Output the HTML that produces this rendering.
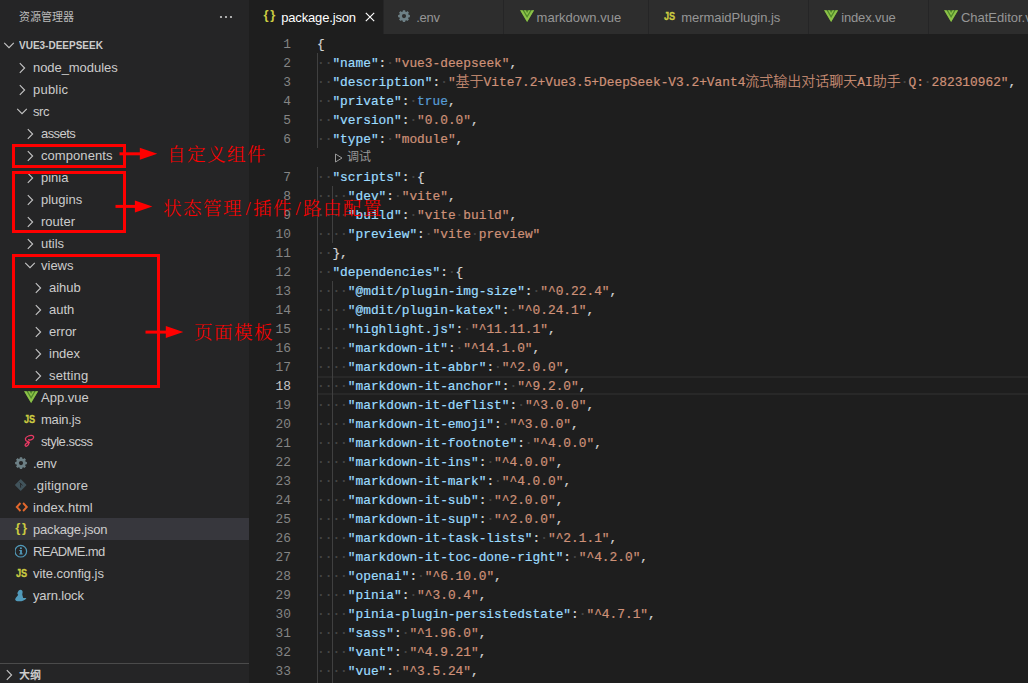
<!DOCTYPE html><html lang="zh-CN"><head><meta charset="utf-8"><title>vue3-deepseek</title><style>
*{box-sizing:border-box;margin:0;padding:0}
html,body{width:1028px;height:683px;overflow:hidden;background:#1e1e1e}
body{position:relative;font-family:"Liberation Sans","Noto Sans CJK SC",sans-serif;font-size:13px;color:#ccc}
#side{position:absolute;left:0;top:0;width:249px;height:683px;background:#252526}
#ed{position:absolute;left:249px;top:0;width:779px;height:683px;background:#1e1e1e;overflow:hidden}
#tabs{position:absolute;left:0;top:0;width:779px;height:34px;background:#252526}
.tab{position:absolute;top:0;height:34px;background:#2d2d2d;border-right:1px solid #252526;color:#969696;line-height:34px;white-space:nowrap;overflow:hidden}
.tab.act{background:#1e1e1e;color:#fff}
.tab .lb{position:absolute;top:0.5px}
.tab svg,.tab .ic{position:absolute}
.ttl{position:absolute;left:19px;top:0;height:34px;line-height:34px;font-size:11px;color:#bbb}
.row{position:absolute;left:0;width:249px;height:22px;line-height:22px;white-space:nowrap}
.row.sel{background:#37373d}
.row .lb{position:absolute;top:1px}
.row svg,.row .ic{position:absolute}
.js{-webkit-text-stroke:0.3px #cbcb41;font-weight:bold;font-size:11.8px;color:#cbcb41;line-height:22px;height:22px;transform:scaleX(0.78);transform-origin:0 0;margin-left:0.5px;margin-top:0px}
.jsn{font-weight:bold;font-size:13px;color:#cbcb41;line-height:22px;height:22px;letter-spacing:1.7px;margin-top:-1px;margin-left:0.3px}
.ln{position:absolute;left:0;width:42px;text-align:right;font-family:"Liberation Mono",monospace;font-size:12.83px;color:#858585;height:19px;line-height:21px}
.ln.cur{color:#c6c6c6}
.cl{position:absolute;left:68px;height:19px;line-height:21px;font-family:"Liberation Mono","Noto Sans CJK SC",monospace;font-size:12.83px;color:#d4d4d4;white-space:pre;-webkit-text-stroke:0.2px}
.cl .k{color:#9cdcfe}.cl .s{color:#ce9178}.cl .b{color:#569cd6}.cl .w{color:#484848}
.cl .cj{font-size:14px;font-weight:300;display:inline-block;width:14px;text-align:center;line-height:21px;vertical-align:top}
.guide{position:absolute;width:1px;background:#404040}
.ann{position:absolute;border:3px solid #ff0000}
.atx{position:absolute;color:#ff0000;font-family:"Liberation Serif","Noto Serif CJK SC",serif;font-size:18.6px;font-weight:300;letter-spacing:1.4px;white-space:nowrap;line-height:24px}
.atx i{display:inline-block;width:10px;text-align:center;font-style:normal;letter-spacing:0}
</style></head><body>
<div id="side">
<div class="ttl">资源管理器</div>
<svg style="position:absolute;left:218px;top:9px" width="16" height="16" viewBox="0 0 16 16"><circle cx="3" cy="8" r="1.1" fill="#ccc"/><circle cx="8" cy="8" r="1.1" fill="#ccc"/><circle cx="13" cy="8" r="1.1" fill="#ccc"/></svg>
<div class="row" style="top:34px">
<svg style="left:0.5px;top:3.3px" width="16" height="16" viewBox="0 0 16 16"><path d="M3.2 5.8 L8 10.6 L12.8 5.8" fill="none" stroke="#c5c5c5" stroke-width="1.1"/></svg>
<span class="lb" style="left:19px;top:0;font-size:11.6px;font-weight:bold;transform:scaleX(0.862);transform-origin:0 0">VUE3-DEEPSEEK</span>
</div>
<div class="row" style="top:56px">
<svg style="left:14px;top:3.7px" width="16" height="16" viewBox="0 0 16 16"><path d="M5.8 3.2 L10.6 8 L5.8 12.8" fill="none" stroke="#c5c5c5" stroke-width="1.1"/></svg>
<span class="lb" style="left:33px;letter-spacing:-0.06px">node_modules</span>
</div>
<div class="row" style="top:78px">
<svg style="left:14px;top:3.7px" width="16" height="16" viewBox="0 0 16 16"><path d="M5.8 3.2 L10.6 8 L5.8 12.8" fill="none" stroke="#c5c5c5" stroke-width="1.1"/></svg>
<span class="lb" style="left:33px;letter-spacing:0.21px">public</span>
</div>
<div class="row" style="top:100px">
<svg style="left:13.5px;top:3.3px" width="16" height="16" viewBox="0 0 16 16"><path d="M3.2 5.8 L8 10.6 L12.8 5.8" fill="none" stroke="#c5c5c5" stroke-width="1.1"/></svg>
<span class="lb" style="left:33px;letter-spacing:-0.42px">src</span>
</div>
<div class="row" style="top:122px">
<svg style="left:22px;top:3.7px" width="16" height="16" viewBox="0 0 16 16"><path d="M5.8 3.2 L10.6 8 L5.8 12.8" fill="none" stroke="#c5c5c5" stroke-width="1.1"/></svg>
<span class="lb" style="left:41px;letter-spacing:-0.58px">assets</span>
</div>
<div class="row" style="top:144px">
<svg style="left:22px;top:3.7px" width="16" height="16" viewBox="0 0 16 16"><path d="M5.8 3.2 L10.6 8 L5.8 12.8" fill="none" stroke="#c5c5c5" stroke-width="1.1"/></svg>
<span class="lb" style="left:41px;letter-spacing:0.07px">components</span>
</div>
<div class="row" style="top:166px">
<svg style="left:22px;top:3.7px" width="16" height="16" viewBox="0 0 16 16"><path d="M5.8 3.2 L10.6 8 L5.8 12.8" fill="none" stroke="#c5c5c5" stroke-width="1.1"/></svg>
<span class="lb" style="left:41px">pinia</span>
</div>
<div class="row" style="top:188px">
<svg style="left:22px;top:3.7px" width="16" height="16" viewBox="0 0 16 16"><path d="M5.8 3.2 L10.6 8 L5.8 12.8" fill="none" stroke="#c5c5c5" stroke-width="1.1"/></svg>
<span class="lb" style="left:41px">plugins</span>
</div>
<div class="row" style="top:210px">
<svg style="left:22px;top:3.7px" width="16" height="16" viewBox="0 0 16 16"><path d="M5.8 3.2 L10.6 8 L5.8 12.8" fill="none" stroke="#c5c5c5" stroke-width="1.1"/></svg>
<span class="lb" style="left:41px">router</span>
</div>
<div class="row" style="top:232px">
<svg style="left:22px;top:3.7px" width="16" height="16" viewBox="0 0 16 16"><path d="M5.8 3.2 L10.6 8 L5.8 12.8" fill="none" stroke="#c5c5c5" stroke-width="1.1"/></svg>
<span class="lb" style="left:41px">utils</span>
</div>
<div class="row" style="top:254px">
<svg style="left:21.5px;top:3.3px" width="16" height="16" viewBox="0 0 16 16"><path d="M3.2 5.8 L8 10.6 L12.8 5.8" fill="none" stroke="#c5c5c5" stroke-width="1.1"/></svg>
<span class="lb" style="left:41px">views</span>
</div>
<div class="row" style="top:276px">
<svg style="left:30px;top:3.7px" width="16" height="16" viewBox="0 0 16 16"><path d="M5.8 3.2 L10.6 8 L5.8 12.8" fill="none" stroke="#c5c5c5" stroke-width="1.1"/></svg>
<span class="lb" style="left:49px">aihub</span>
</div>
<div class="row" style="top:298px">
<svg style="left:30px;top:3.7px" width="16" height="16" viewBox="0 0 16 16"><path d="M5.8 3.2 L10.6 8 L5.8 12.8" fill="none" stroke="#c5c5c5" stroke-width="1.1"/></svg>
<span class="lb" style="left:49px">auth</span>
</div>
<div class="row" style="top:320px">
<svg style="left:30px;top:3.7px" width="16" height="16" viewBox="0 0 16 16"><path d="M5.8 3.2 L10.6 8 L5.8 12.8" fill="none" stroke="#c5c5c5" stroke-width="1.1"/></svg>
<span class="lb" style="left:49px">error</span>
</div>
<div class="row" style="top:342px">
<svg style="left:30px;top:3.7px" width="16" height="16" viewBox="0 0 16 16"><path d="M5.8 3.2 L10.6 8 L5.8 12.8" fill="none" stroke="#c5c5c5" stroke-width="1.1"/></svg>
<span class="lb" style="left:49px">index</span>
</div>
<div class="row" style="top:364px">
<svg style="left:30px;top:3.7px" width="16" height="16" viewBox="0 0 16 16"><path d="M5.8 3.2 L10.6 8 L5.8 12.8" fill="none" stroke="#c5c5c5" stroke-width="1.1"/></svg>
<span class="lb" style="left:49px;letter-spacing:0.14px">setting</span>
</div>
<div class="row" style="top:386px">
<svg style="left:23px;top:0px" width="18" height="22" viewBox="0 0 18 22"><path d="M1.1 5.3 H15.1 L8.1 16.9 Z" fill="#4f8a2a"/><path d="M1.1 5.3 H3.5 L8.1 13 L12.7 5.3 H15.1 L8.1 16.9 Z" fill="#8dc149"/><path d="M5 5.3 H6.6 L8.1 7.9 L9.6 5.3 H11.2 L8.1 10.4 Z" fill="#8dc149"/></svg>
<span class="lb" style="left:41px">App.vue</span>
</div>
<div class="row" style="top:408px">
<span class="ic js" style="left:23px;top:0px">JS</span>
<span class="lb" style="left:41px;letter-spacing:-0.21px">main.js</span>
</div>
<div class="row" style="top:430px">
<svg style="left:23px;top:0px" width="18" height="22" viewBox="0 0 18 22"><path d="M4.6 11.6 C1.4 10.2 1.6 7.4 5.4 6 C8.6 4.8 11.2 5.6 10.6 7.6 C10 9.6 7 10.6 5.6 9.6 M4.8 11.4 C6.6 11.8 6.2 14.4 4.2 15.8 C2.8 16.8 1.6 15.8 2.4 14.4 C3 13.4 4.6 12.6 6.4 12.4" fill="none" stroke="#ea3a64" stroke-width="1.3" stroke-linecap="round"/></svg>
<span class="lb" style="left:41px;letter-spacing:-0.47px">style.scss</span>
</div>
<div class="row" style="top:452px">
<svg style="left:15px;top:0px" width="18" height="22" viewBox="0 0 18 22"><path d="M4.77 6.46 L4.83 5.22 L7.17 5.22 L7.23 6.46 L8.41 6.95 L9.33 6.11 L10.99 7.77 L10.15 8.69 L10.64 9.87 L11.88 9.93 L11.88 12.27 L10.64 12.33 L10.15 13.51 L10.99 14.43 L9.33 16.09 L8.41 15.25 L7.23 15.74 L7.17 16.98 L4.83 16.98 L4.77 15.74 L3.59 15.25 L2.67 16.09 L1.01 14.43 L1.85 13.51 L1.36 12.33 L0.12 12.27 L0.12 9.93 L1.36 9.87 L1.85 8.69 L1.01 7.77 L2.67 6.11 L3.59 6.95 Z" fill="#6d8086"/><circle cx="6" cy="11.1" r="2.1" fill="#252526"/></svg>
<span class="lb" style="left:33px;letter-spacing:-0.31px">.env</span>
</div>
<div class="row" style="top:474px">
<svg style="left:15px;top:0px" width="18" height="22" viewBox="0 0 18 22"><rect x="1.5" y="6.8" width="8.4" height="8.4" rx="0.7" transform="rotate(45 5.7 11)" fill="#41535b"/><path d="M4.6 8.6 L7.6 11.4 M5.6 9.4 V13.6" stroke="#252526" stroke-width="0.9" fill="none"/></svg>
<span class="lb" style="left:33px;letter-spacing:0.17px">.gitignore</span>
</div>
<div class="row" style="top:496px">
<svg style="left:15px;top:0px" width="18" height="22" viewBox="0 0 18 22"><path d="M5.5 7 L1.8 11 L5.5 15 M8.1 7 L11.8 11 L8.1 15" fill="none" stroke="#e4682d" stroke-width="1.9"/></svg>
<span class="lb" style="left:33px;letter-spacing:0.05px">index.html</span>
</div>
<div class="row sel" style="top:518px">
<span class="ic jsn" style="left:15px;top:0px">{}</span>
<span class="lb" style="left:33px;letter-spacing:-0.19px">package.json</span>
</div>
<div class="row" style="top:540px">
<svg style="left:15px;top:0px" width="18" height="22" viewBox="0 0 18 22"><circle cx="5.8" cy="11.2" r="5.8" fill="none" stroke="#519aba" stroke-width="1.2"/><rect x="5.1" y="10" width="1.8" height="4.2" fill="#519aba"/><circle cx="5.9" cy="8.3" r="1.05" fill="#519aba"/><rect x="4.2" y="13.5" width="3.6" height="0.9" fill="#519aba"/><rect x="4.2" y="10" width="1.8" height="0.9" fill="#519aba"/></svg>
<span class="lb" style="left:33px;letter-spacing:-0.64px">README.md</span>
</div>
<div class="row" style="top:562px">
<span class="ic js" style="left:15px;top:0px">JS</span>
<span class="lb" style="left:33px;letter-spacing:-0.05px">vite.config.js</span>
</div>
<div class="row" style="top:584px">
<svg style="left:15px;top:0px" width="18" height="22" viewBox="0 0 18 22"><path d="M5.5 5.8 C6.8 5.8 7.8 7 7.6 8.2 C7.5 9.4 7.2 10 7.3 10.8 C7.6 12 8 13 8.2 14 C9.4 14.2 10.4 13.8 11.4 14.3 C10.6 15.6 8.6 17 6.4 17.2 C4.4 17.4 2.4 17.4 1.4 16.9 C0.4 16.4 0 15.6 0.25 14.9 C0.8 13.4 2.6 12.4 3.2 10.8 C2.4 10.2 2.2 9.2 2.6 8.5 C3.2 7 4.2 5.9 5.5 5.8 Z" fill="#519aba"/></svg>
<span class="lb" style="left:33px;letter-spacing:-0.14px">yarn.lock</span>
</div>
<div style="position:absolute;left:0;top:663px;width:249px;height:1px;background:#4b4b4b"></div>
<div class="row" style="top:664px"><svg style="left:1px;top:2.7px" width="16" height="16" viewBox="0 0 16 16"><path d="M5.8 3.2 L10.6 8 L5.8 12.8" fill="none" stroke="#c5c5c5" stroke-width="1.1"/></svg><span class="lb" style="left:19px;top:0;font-size:11px;font-weight:bold">大纲</span></div>
</div>
<div id="ed">
<div id="tabs">
<div class="tab act" style="left:0px;width:135px">
<span class="ic jsn" style="left:14.2px;top:4.6px">{}</span>
<span class="lb" style="left:32.2px;letter-spacing:-0.16px">package.json</span>
<svg style="left:112.5px;top:9.3px" width="16" height="16" viewBox="0 0 16 16"><path d="M3.8 3.8 L12.2 12.2 M12.2 3.8 L3.8 12.2" stroke="#fff" stroke-width="1.15" fill="none"/></svg>
</div>
<div class="tab" style="left:135px;width:120px">
<svg style="left:14.2px;top:4.6px" width="18" height="22" viewBox="0 0 18 22"><path d="M4.77 6.46 L4.83 5.22 L7.17 5.22 L7.23 6.46 L8.41 6.95 L9.33 6.11 L10.99 7.77 L10.15 8.69 L10.64 9.87 L11.88 9.93 L11.88 12.27 L10.64 12.33 L10.15 13.51 L10.99 14.43 L9.33 16.09 L8.41 15.25 L7.23 15.74 L7.17 16.98 L4.83 16.98 L4.77 15.74 L3.59 15.25 L2.67 16.09 L1.01 14.43 L1.85 13.51 L1.36 12.33 L0.12 12.27 L0.12 9.93 L1.36 9.87 L1.85 8.69 L1.01 7.77 L2.67 6.11 L3.59 6.95 Z" fill="#6d8086"/><circle cx="6" cy="11.1" r="2.1" fill="#2d2d2d"/></svg>
<span class="lb" style="left:32.2px;letter-spacing:-0.25px">.env</span>
</div>
<div class="tab" style="left:255px;width:145px">
<svg style="left:14.6px;top:4.6px" width="18" height="22" viewBox="0 0 18 22"><path d="M1.1 5.3 H15.1 L8.1 16.9 Z" fill="#4f8a2a"/><path d="M1.1 5.3 H3.5 L8.1 13 L12.7 5.3 H15.1 L8.1 16.9 Z" fill="#8dc149"/><path d="M5 5.3 H6.6 L8.1 7.9 L9.6 5.3 H11.2 L8.1 10.4 Z" fill="#8dc149"/></svg>
<span class="lb" style="left:32.6px">markdown.vue</span>
</div>
<div class="tab" style="left:400px;width:160px">
<span class="ic js" style="left:14.3px;top:4.6px">JS</span>
<span class="lb" style="left:32.3px;letter-spacing:-0.05px">mermaidPlugin.js</span>
</div>
<div class="tab" style="left:560px;width:120px">
<svg style="left:14.2px;top:4.6px" width="18" height="22" viewBox="0 0 18 22"><path d="M1.1 5.3 H15.1 L8.1 16.9 Z" fill="#4f8a2a"/><path d="M1.1 5.3 H3.5 L8.1 13 L12.7 5.3 H15.1 L8.1 16.9 Z" fill="#8dc149"/><path d="M5 5.3 H6.6 L8.1 7.9 L9.6 5.3 H11.2 L8.1 10.4 Z" fill="#8dc149"/></svg>
<span class="lb" style="left:32.2px;letter-spacing:-0.14px">index.vue</span>
</div>
<div class="tab" style="left:680px;width:140px">
<svg style="left:13.9px;top:4.6px" width="18" height="22" viewBox="0 0 18 22"><path d="M1.1 5.3 H15.1 L8.1 16.9 Z" fill="#4f8a2a"/><path d="M1.1 5.3 H3.5 L8.1 13 L12.7 5.3 H15.1 L8.1 16.9 Z" fill="#8dc149"/><path d="M5 5.3 H6.6 L8.1 7.9 L9.6 5.3 H11.2 L8.1 10.4 Z" fill="#8dc149"/></svg>
<span class="lb" style="left:31.9px">ChatEditor.vue</span>
</div>
</div>
<div class="ln" style="top:34px">1</div>
<div class="cl" style="top:34px">{</div>
<div class="ln" style="top:53px">2</div>
<div class="cl" style="top:53px"><span class="w">··</span><span class="k">&quot;name&quot;</span>:<span class="w">·</span><span class="s">&quot;vue3-deepseek&quot;</span>,</div>
<div class="ln" style="top:72px">3</div>
<div class="cl" style="top:72px"><span class="w">··</span><span class="k">&quot;description&quot;</span>:<span class="w">·</span><span class="s">&quot;<span class="cj">基</span><span class="cj">于</span>Vite7.2+Vue3.5+DeepSeek-V3.2+Vant4<span class="cj">流</span><span class="cj">式</span><span class="cj">输</span><span class="cj">出</span><span class="cj">对</span><span class="cj">话</span><span class="cj">聊</span><span class="cj">天</span>AI<span class="cj">助</span><span class="cj">手</span></span><span class="w">·</span><span class="s">Q:</span><span class="w">·</span><span class="s">282310962&quot;</span>,</div>
<div class="ln" style="top:91px">4</div>
<div class="cl" style="top:91px"><span class="w">··</span><span class="k">&quot;private&quot;</span>:<span class="w">·</span><span class="b">true</span>,</div>
<div class="ln" style="top:110px">5</div>
<div class="cl" style="top:110px"><span class="w">··</span><span class="k">&quot;version&quot;</span>:<span class="w">·</span><span class="s">&quot;0.0.0&quot;</span>,</div>
<div class="ln" style="top:129px">6</div>
<div class="cl" style="top:129px"><span class="w">··</span><span class="k">&quot;type&quot;</span>:<span class="w">·</span><span class="s">&quot;module&quot;</span>,</div>
<div style="position:absolute;left:84px;top:148px;height:18px;line-height:18px;font-size:12px;color:#999;white-space:nowrap"><svg style="position:absolute;left:1px;top:4.5px" width="10" height="10" viewBox="0 0 10 10"><path d="M1.5 1 L8 5 L1.5 9 Z" fill="none" stroke="#999" stroke-width="1"/></svg><span style="position:absolute;left:14px;top:0">调试</span></div>
<div class="ln" style="top:167px">7</div>
<div class="cl" style="top:167px"><span class="w">··</span><span class="k">&quot;scripts&quot;</span>:<span class="w">·</span>{</div>
<div class="ln" style="top:186px">8</div>
<div class="cl" style="top:186px"><span class="w">····</span><span class="k">&quot;dev&quot;</span>:<span class="w">·</span><span class="s">&quot;vite&quot;</span>,</div>
<div class="ln" style="top:205px">9</div>
<div class="cl" style="top:205px"><span class="w">····</span><span class="k">&quot;build&quot;</span>:<span class="w">·</span><span class="s">&quot;vite</span><span class="w">·</span><span class="s">build&quot;</span>,</div>
<div class="ln" style="top:224px">10</div>
<div class="cl" style="top:224px"><span class="w">····</span><span class="k">&quot;preview&quot;</span>:<span class="w">·</span><span class="s">&quot;vite</span><span class="w">·</span><span class="s">preview&quot;</span></div>
<div class="ln" style="top:243px">11</div>
<div class="cl" style="top:243px"><span class="w">··</span>},</div>
<div class="ln" style="top:262px">12</div>
<div class="cl" style="top:262px"><span class="w">··</span><span class="k">&quot;dependencies&quot;</span>:<span class="w">·</span>{</div>
<div class="ln" style="top:281px">13</div>
<div class="cl" style="top:281px"><span class="w">····</span><span class="k">&quot;@mdit/plugin-img-size&quot;</span>:<span class="w">·</span><span class="s">&quot;^0.22.4&quot;</span>,</div>
<div class="ln" style="top:300px">14</div>
<div class="cl" style="top:300px"><span class="w">····</span><span class="k">&quot;@mdit/plugin-katex&quot;</span>:<span class="w">·</span><span class="s">&quot;^0.24.1&quot;</span>,</div>
<div class="ln" style="top:319px">15</div>
<div class="cl" style="top:319px"><span class="w">····</span><span class="k">&quot;highlight.js&quot;</span>:<span class="w">·</span><span class="s">&quot;^11.11.1&quot;</span>,</div>
<div class="ln" style="top:338px">16</div>
<div class="cl" style="top:338px"><span class="w">····</span><span class="k">&quot;markdown-it&quot;</span>:<span class="w">·</span><span class="s">&quot;^14.1.0&quot;</span>,</div>
<div class="ln" style="top:357px">17</div>
<div class="cl" style="top:357px"><span class="w">····</span><span class="k">&quot;markdown-it-abbr&quot;</span>:<span class="w">·</span><span class="s">&quot;^2.0.0&quot;</span>,</div>
<div style="position:absolute;left:68px;top:376px;width:711px;height:19px;border-top:2px solid #282828;border-bottom:2px solid #282828"></div>
<div class="ln cur" style="top:376px">18</div>
<div class="cl" style="top:376px"><span class="w">····</span><span class="k">&quot;markdown-it-anchor&quot;</span>:<span class="w">·</span><span class="s">&quot;^9.2.0&quot;</span>,</div>
<div class="ln" style="top:395px">19</div>
<div class="cl" style="top:395px"><span class="w">····</span><span class="k">&quot;markdown-it-deflist&quot;</span>:<span class="w">·</span><span class="s">&quot;^3.0.0&quot;</span>,</div>
<div class="ln" style="top:414px">20</div>
<div class="cl" style="top:414px"><span class="w">····</span><span class="k">&quot;markdown-it-emoji&quot;</span>:<span class="w">·</span><span class="s">&quot;^3.0.0&quot;</span>,</div>
<div class="ln" style="top:433px">21</div>
<div class="cl" style="top:433px"><span class="w">····</span><span class="k">&quot;markdown-it-footnote&quot;</span>:<span class="w">·</span><span class="s">&quot;^4.0.0&quot;</span>,</div>
<div class="ln" style="top:452px">22</div>
<div class="cl" style="top:452px"><span class="w">····</span><span class="k">&quot;markdown-it-ins&quot;</span>:<span class="w">·</span><span class="s">&quot;^4.0.0&quot;</span>,</div>
<div class="ln" style="top:471px">23</div>
<div class="cl" style="top:471px"><span class="w">····</span><span class="k">&quot;markdown-it-mark&quot;</span>:<span class="w">·</span><span class="s">&quot;^4.0.0&quot;</span>,</div>
<div class="ln" style="top:490px">24</div>
<div class="cl" style="top:490px"><span class="w">····</span><span class="k">&quot;markdown-it-sub&quot;</span>:<span class="w">·</span><span class="s">&quot;^2.0.0&quot;</span>,</div>
<div class="ln" style="top:509px">25</div>
<div class="cl" style="top:509px"><span class="w">····</span><span class="k">&quot;markdown-it-sup&quot;</span>:<span class="w">·</span><span class="s">&quot;^2.0.0&quot;</span>,</div>
<div class="ln" style="top:528px">26</div>
<div class="cl" style="top:528px"><span class="w">····</span><span class="k">&quot;markdown-it-task-lists&quot;</span>:<span class="w">·</span><span class="s">&quot;^2.1.1&quot;</span>,</div>
<div class="ln" style="top:547px">27</div>
<div class="cl" style="top:547px"><span class="w">····</span><span class="k">&quot;markdown-it-toc-done-right&quot;</span>:<span class="w">·</span><span class="s">&quot;^4.2.0&quot;</span>,</div>
<div class="ln" style="top:566px">28</div>
<div class="cl" style="top:566px"><span class="w">····</span><span class="k">&quot;openai&quot;</span>:<span class="w">·</span><span class="s">&quot;^6.10.0&quot;</span>,</div>
<div class="ln" style="top:585px">29</div>
<div class="cl" style="top:585px"><span class="w">····</span><span class="k">&quot;pinia&quot;</span>:<span class="w">·</span><span class="s">&quot;^3.0.4&quot;</span>,</div>
<div class="ln" style="top:604px">30</div>
<div class="cl" style="top:604px"><span class="w">····</span><span class="k">&quot;pinia-plugin-persistedstate&quot;</span>:<span class="w">·</span><span class="s">&quot;^4.7.1&quot;</span>,</div>
<div class="ln" style="top:623px">31</div>
<div class="cl" style="top:623px"><span class="w">····</span><span class="k">&quot;sass&quot;</span>:<span class="w">·</span><span class="s">&quot;^1.96.0&quot;</span>,</div>
<div class="ln" style="top:642px">32</div>
<div class="cl" style="top:642px"><span class="w">····</span><span class="k">&quot;vant&quot;</span>:<span class="w">·</span><span class="s">&quot;^4.9.21&quot;</span>,</div>
<div class="ln" style="top:661px">33</div>
<div class="cl" style="top:661px"><span class="w">····</span><span class="k">&quot;vue&quot;</span>:<span class="w">·</span><span class="s">&quot;^3.5.24&quot;</span>,</div>
<div class="ln" style="top:680px">34</div>
<div class="cl" style="top:680px"><span class="w">····</span><span class="k">&quot;vue-router&quot;</span>:<span class="w">·</span><span class="s">&quot;^4.6.3&quot;</span></div>
<div class="guide" style="left:68px;top:53px;height:95px;background:#404040"></div>
<div class="guide" style="left:68px;top:167px;height:516px;background:#404040"></div>
<div class="guide" style="left:83px;top:186px;height:57px;background:#404040"></div>
<div class="guide" style="left:83px;top:281px;height:402px;background:#404040"></div>
</div>
<div class="ann" style="left:12px;top:144px;width:114px;height:24px"></div>
<div class="ann" style="left:12px;top:171px;width:114px;height:62px"></div>
<div class="ann" style="left:12px;top:254px;width:148px;height:134px"></div>
<svg style="position:absolute;left:0;top:0" width="1028" height="683" viewBox="0 0 1028 683"><path d="M119.5 153.8 H141.8" stroke="#ff0000" stroke-width="3" fill="none"/><path d="M139.8 147.8 L157.3 153.8 L139.8 159.8 Z" fill="#ff0000"/></svg>
<svg style="position:absolute;left:0;top:0" width="1028" height="683" viewBox="0 0 1028 683"><path d="M115.5 206.4 H136.9" stroke="#ff0000" stroke-width="3" fill="none"/><path d="M134.9 200.4 L152.4 206.4 L134.9 212.4 Z" fill="#ff0000"/></svg>
<svg style="position:absolute;left:0;top:0" width="1028" height="683" viewBox="0 0 1028 683"><path d="M145.5 332.1 H167.8" stroke="#ff0000" stroke-width="3" fill="none"/><path d="M165.8 326.1 L183.3 332.1 L165.8 338.1 Z" fill="#ff0000"/></svg>
<div class="atx" style="left:167px;top:143px">自定义组件</div>
<div class="atx" style="left:163px;top:197px">状态管理<i>/</i>插件<i>/</i>路由配置</div>
<div class="atx" style="left:194px;top:321px">页面模板</div>
</body></html>
